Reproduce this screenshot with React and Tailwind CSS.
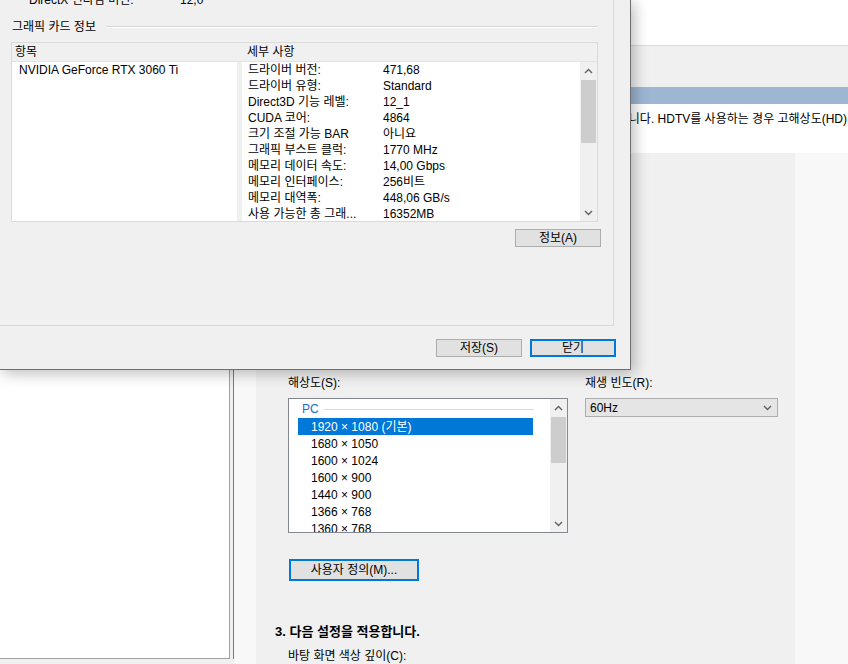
import React from "react";

const Chevron = ({ dir = "up", className = "" }) => (
  <svg width="9" height="6" viewBox="0 0 9 6" className={className}>
    {dir === "up" ? (
      <polyline points="1,5 4.5,1.5 8,5" fill="none" stroke="#606060" strokeWidth="1.4" />
    ) : (
      <polyline points="1,1 4.5,4.5 8,1" fill="none" stroke="#606060" strokeWidth="1.4" />
    )}
  </svg>
);

// vertical scrollbar used by both list boxes
const ScrollBar = ({ thumbTop, thumbHeight }) => (
  <div className="flex w-[17px] shrink-0 flex-col bg-[#f0f0f0]">
    <div className="flex h-[17px] shrink-0 items-center justify-center">
      <Chevron dir="up" />
    </div>
    <div className="relative flex-1">
      <div
        className="absolute left-[1px] right-[1px] bg-[#cdcdcd]"
        style={{ top: thumbTop, height: thumbHeight }}
      />
    </div>
    <div className="flex h-[17px] shrink-0 items-center justify-center">
      <Chevron dir="down" />
    </div>
  </div>
);

const details = [
  ["드라이버 버전:", "471,68"],
  ["드라이버 유형:", "Standard"],
  ["Direct3D 기능 레벨:", "12_1"],
  ["CUDA 코어:", "4864"],
  ["크기 조절 가능 BAR", "아니요"],
  ["그래픽 부스트 클럭:", "1770 MHz"],
  ["메모리 데이터 속도:", "14,00 Gbps"],
  ["메모리 인터페이스:", "256비트"],
  ["메모리 대역폭:", "448,06 GB/s"],
  ["사용 가능한 총 그래...", "16352MB"],
];

const resolutions = [
  "1680 × 1050",
  "1600 × 1024",
  "1600 × 900",
  "1440 × 900",
  "1366 × 768",
  "1360 × 768",
];

const WinButton = ({ children, focused }) => (
  <div
    className={
      focused
        ? "flex h-[18px] w-[86px] items-center justify-center border-2 border-[#0078d7] bg-[#e1e1e1]"
        : "flex h-[18px] w-[86px] items-center justify-center border border-[#adadad] bg-[#e1e1e1]"
    }
  >
    {children}
  </div>
);

const SystemInfoDialog = () => (
  <div className="absolute left-0 top-0 h-[370px] w-[631px] border-r border-b border-[#6f6f6f] bg-[#f0f0f0] shadow-[3px_3px_14px_rgba(0,0,0,0.28)]">
    {/* tab page */}
    <div className="flex h-[326px] w-[614px] flex-col border-r border-b border-[#d9d9d9]">
      <div className="-mt-[8px] flex h-[16px] shrink-0 pl-[29px]">
        <span className="w-[151px]">DirectX 런타임 버전:</span>
        <span>12,0</span>
      </div>

      <div className="mt-[11px] flex h-[16px] shrink-0 items-center pl-[12px] pr-[15px]">
        <span>그래픽 카드 정보</span>
        <div className="ml-[10px] h-[2px] flex-1 border-t border-b border-t-[#d5d5d5] border-b-white" />
      </div>

      <div className="ml-[11px] mt-[7px] flex h-[180px] w-[587px] shrink-0 flex-col border border-[#dadada]">
        <div className="flex h-[19px] shrink-0 items-center border-b border-[#e3e3e3] bg-[#f0f0f0]">
          <span className="w-[235px] pl-[3px]">항목</span>
          <span>세부 사항</span>
        </div>
        <div className="flex flex-1 overflow-hidden">
          <div className="w-[225px] bg-white pl-[7px]">
            <div className="h-[16px]">NVIDIA GeForce RTX 3060 Ti</div>
          </div>
          <div className="w-[5px] bg-[#f0f0f0]" />
          <div className="w-[338px] overflow-hidden bg-white pl-[6px]">
            {details.map(([k, v]) => (
              <div key={k} className="flex h-[16px] whitespace-nowrap">
                <span className="w-[135px] shrink-0">{k}</span>
                <span>{v}</span>
              </div>
            ))}
          </div>
          <ScrollBar thumbTop={1} thumbHeight={63} />
        </div>
      </div>

      <div className="ml-[515px] mt-[7px]">
        <WinButton>정보(A)</WinButton>
      </div>
    </div>

    <div className="ml-[436px] mt-[13px] flex gap-[8px]">
      <WinButton>저장(S)</WinButton>
      <WinButton focused>닫기</WinButton>
    </div>
  </div>
);

const ControlPanel = () => (
  <div className="flex h-[664px] w-[848px] flex-col bg-[#f0f0f0]">
    <div className="h-[46px] shrink-0 border-b border-[#dcdcdc] bg-white" />
    <div className="h-[41px] shrink-0 bg-[#f0f0f0]" />
    <div className="h-[17px] shrink-0 bg-[#9db6d3]" />
    <div className="flex h-[49px] shrink-0 justify-end overflow-hidden whitespace-nowrap bg-white pr-[1px] pt-[7px]">
      해상도를 선택합니다. HDTV를 사용하는 경우 고해상도(HD)
    </div>

    <div className="flex flex-1">
      {/* navigation tree */}
      <div className="mb-[5px] flex w-[234px] shrink-0">
        <div className="flex-1 border-r border-b border-[#a0a0a0] bg-white" />
        <div className="w-[4px] border-r border-[#7a7a7a] bg-[#f0f0f0]" />
      </div>
      <div className="w-[22px] shrink-0 bg-[#f8f8f8]" />

      {/* page content */}
      <div className="w-[539px] shrink-0 bg-[#f0f0f0] pt-[222px]">
        <div className="flex gap-[17px] pl-[32px]">
          <div className="w-[280px]">
            <div className="h-[16px]">해상도(S):</div>
            <div className="mt-[7px] flex h-[135px] border border-[#828790] bg-white">
              <div className="flex-1 overflow-hidden pl-[9px] pr-[16px] pt-[1px]">
                <div className="flex h-[18px] items-center pl-[4px]">
                  <span className="text-[#1b6ad0]">PC</span>
                  <div className="ml-[5px] h-px flex-1 bg-[#dadada]" />
                </div>
                <div className="mr-[1px] flex h-[17px] items-center bg-[#0078d7] pl-[13px] text-white">
                  1920 × 1080 (기본)
                </div>
                {resolutions.map((r) => (
                  <div key={r} className="flex h-[17px] items-center pl-[13px]">
                    {r}
                  </div>
                ))}
              </div>
              <ScrollBar thumbTop={1} thumbHeight={46} />
            </div>
            <div className="ml-[1px] mt-[26px] flex h-[22px] w-[130px] items-center justify-center border-2 border-[#0078d7] bg-[#e1e1e1]">
              사용자 정의(M)...
            </div>
          </div>

          <div className="w-[193px]">
            <div className="h-[16px]">재생 빈도(R):</div>
            <div className="mt-[7px] flex h-[19px] items-center justify-between border border-[#adadad] bg-[#e5e5e5] pl-[4px] pr-[5px]">
              <span>60Hz</span>
              <Chevron dir="down" />
            </div>
          </div>
        </div>

        <div className="mt-[43px] pl-[19px] text-[13px] font-bold leading-[16px]">
          3. 다음 설정을 적용합니다.
        </div>
        <div className="mt-[8px] pl-[32px]">바탕 화면 색상 깊이(C):</div>
      </div>

      <div className="flex-1 bg-[#f8f8f8]" />
    </div>
  </div>
);

export default function App() {
  return (
    <div className="relative h-[664px] w-[848px] overflow-hidden font-['Liberation_Sans','Noto_Sans_CJK_KR',sans-serif] text-[12px] leading-[16px] text-black">
      <ControlPanel />
      <SystemInfoDialog />
    </div>
  );
}
